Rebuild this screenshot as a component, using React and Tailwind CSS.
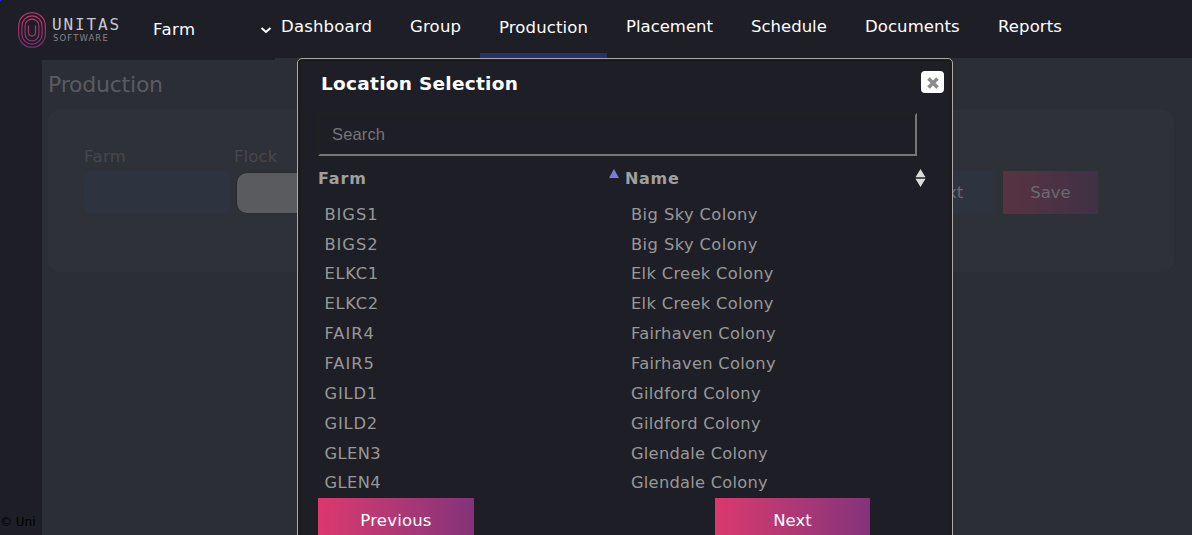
import React from "react";

const NAV = [
  { label: "Dashboard", box: "w-[129px] tracking-[0.17px]" },
  { label: "Group", box: "w-[89px] tracking-[0.2px]" },
  { label: "Production", box: "w-[127px] tracking-[0.12px]", active: true },
  { label: "Placement", box: "w-[125px]" },
  { label: "Schedule", box: "w-[114px]" },
  { label: "Documents", box: "w-[133px] tracking-[0.08px]" },
  { label: "Reports", box: "w-[103px] tracking-[0.1px]" },
];

const BIG = ["tracking-[0.95px]", "tracking-[0.42px]"];
const ELK = ["tracking-[0.7px]", "tracking-[0.33px]"];
const FAIR = ["tracking-[0.95px]", "tracking-[0.31px]"];
const GILD = ["tracking-[0.8px]", "tracking-[0.3px]"];
const GLEN = ["tracking-[0.4px]", "tracking-[0.24px]"];

const ROWS = [
  ["BIGS1", "Big Sky Colony", BIG],
  ["BIGS2", "Big Sky Colony", BIG],
  ["ELKC1", "Elk Creek Colony", ELK],
  ["ELKC2", "Elk Creek Colony", ELK],
  ["FAIR4", "Fairhaven Colony", FAIR],
  ["FAIR5", "Fairhaven Colony", FAIR],
  ["GILD1", "Gildford Colony", GILD],
  ["GILD2", "Gildford Colony", GILD],
  ["GLEN3", "Glendale Colony", GLEN],
  ["GLEN4", "Glendale Colony", GLEN],
];

function Logo() {
  return (
    <div className="flex w-[135px] shrink-0 pl-[18px] pt-3">
      <svg width="28" height="36" viewBox="0 0 28 36" fill="none" stroke="url(#logo)" strokeWidth="1.1">
        <defs>
          <linearGradient id="logo" x1="0" y1="0" x2="0" y2="36" gradientUnits="userSpaceOnUse">
            <stop offset="0" stopColor="#d0366a" />
            <stop offset="1" stopColor="#7d3075" />
          </linearGradient>
        </defs>
        <rect x="0.7" y="0.7" width="26.6" height="34.6" rx="13" />
        <rect x="3.9" y="3.900" width="20.2" height="28.200" rx="10" />
        <rect x="7.1" y="7.100" width="13.8" height="21.800" rx="6.9" />
        <path d="M10.500 13.500v6.500c0 2.500 1.200 4 3.500 4s3.500-1.500 3.500-4v-6.500" strokeWidth="1.300" />
      </svg>
      <div className="flex flex-col pl-[6px] pt-1 font-['DejaVu_Sans_Mono',monospace]">
        <span className="h-[17px] text-[16px] leading-[17px] tracking-[1.850px] text-[#c8c8cb]">UNITAS</span>
        <span className="h-[9px] pl-px pt-px font-['DejaVu_Sans',sans-serif] text-[8.500px] leading-[9px] tracking-[1.100px] text-[#85858a]">SOFTWARE</span>
      </div>
    </div>
  );
}

function Header() {
  return (
    <header className="relative z-10 flex h-[58px] bg-[#1e1e27] text-white">
      <div className="flex h-[60px] w-[275px] shrink-0 bg-[#1e1e27]">
        <Logo />
        <div className="flex grow items-center justify-between pl-[18px] pr-[3px]">
          <span className="pt-px text-[16.500px] tracking-[0.5px]">Farm</span>
          <svg width="12" height="8" viewBox="0 0 12 8" fill="none" stroke="#fff" strokeWidth="2">
            <path d="M1.500 2l4.500 4 4.500-4" />
          </svg>
        </div>
      </div>
      <nav className="-ml-[13px] flex h-[58px]">
        {NAV.map((n) => (
          <div
            key={n.label}
            className={
              n.active
                ? "flex h-[58px] border-b-[5px] border-[#27306c] pl-[19px] pt-4 " + n.box
                : "flex h-[58px] pl-[19px] pt-[15px] " + n.box
            }
          >
            <span className="text-[16.500px] leading-6">{n.label}</span>
          </div>
        ))}
      </nav>
    </header>
  );
}

function Page() {
  return (
    <div className="flex h-[477px]">
      <aside className="flex w-[42px] shrink-0 flex-col justify-end overflow-hidden bg-[#1e1e27] pb-[4px] text-[12px] leading-[17px] whitespace-nowrap text-black">
        © Uni
      </aside>
      <main className="grow bg-[#2c2e36] pl-[6px] pr-[18px] pt-[11px]">
        <h1 className="h-[41px] text-[22px] leading-[31px] tracking-[-0.220px] text-[#5a5b60]">Production</h1>
        <section className="flex h-[162px] justify-between rounded-xl bg-[#2f3139] pl-9 pr-[76px] pt-9 text-[16.500px]">
          <div className="flex gap-[3px]">
            <div className="w-[146px] leading-[22px] tracking-[0.400px] text-[#46474c]">
              Farm
              <div className="mt-[3px] h-[42px] rounded-md bg-[#2e343f]" />
            </div>
            <div className="w-[200px] pl-px leading-[22px] tracking-[0.100px] text-[#46474c]">
              Flock
              <div className="mt-[4px] ml-[2px] h-[42px] rounded-[11px] border border-[#28292e] bg-[#5a5b5f]" />
            </div>
          </div>
          <div className="flex gap-[10px] pt-[25px] text-[#6a696f]">
            <div className="flex h-[43px] w-[95px] items-center justify-center bg-[#2e3340] pt-px pr-[3px]">Next</div>
            <div className="flex h-[43px] w-[95px] items-center justify-center bg-linear-to-r from-[#583341] to-[#403145] pt-px">Save</div>
          </div>
        </section>
      </main>
    </div>
  );
}

function Dialog() {
  return (
    <div className="absolute left-[297px] top-[58px] z-20 flex h-[500px] w-[656px] flex-col rounded-t-[5px] border border-[#a9a9a9] bg-[#1e1e27] shadow-[inset_0_0_0_3px_#1c1c1d]">
      <div className="flex h-[54px] shrink-0 items-start justify-between pl-[23px] pr-2 pt-3">
        <h2 className="text-[18.500px] leading-[26px] font-bold tracking-[0.270px] text-white">Location Selection</h2>
        <button className="flex h-[22px] w-[23px] items-center justify-center rounded-[4px] bg-white pl-px pt-[2px]">
          <svg width="12" height="12" viewBox="0 0 12 12" stroke="#8b8b8b" strokeWidth="3.600">
            <path d="M1.500 1.500l9 9M10.500 1.500l-9 9" />
          </svg>
        </button>
      </div>
      <div className="ml-5 flex h-[43px] w-[599px] shrink-0 items-center border-2 border-t-[#20201f] border-l-[#20201f] border-r-[#767676] border-b-[#767676] pl-3 font-['Liberation_Sans',sans-serif] text-[16.500px] tracking-[0.150px] text-[#757575]">
        Search
      </div>
      <div className="flex h-[43px] shrink-0 pl-5 pt-[9px] text-[16px] leading-[27px] font-bold text-[#a0a09e]">
        <div className="flex w-[307px] justify-between pr-[6px]">
          <span className="tracking-[0.850px]">Farm</span>
          <svg className="mt-1" width="10" height="9" viewBox="0 0 10 9"><path d="M5 0l5 9H0z" fill="#7b7bdc" /></svg>
        </div>
        <div className="flex w-[301px] justify-between">
          <span className="tracking-[0.700px]">Name</span>
          <svg className="mt-[4px]" width="11" height="18" viewBox="0 0 11 18" fill="#dcdcdc"><path d="M5.500 0l5 8.300H.5zM5.500 18L.5 9.700h10z" /></svg>
        </div>
      </div>
      <div className="flex h-[299px] shrink-0 flex-col pl-[26.500px] pt-px text-[16.300px] text-[#989896]">
        {ROWS.map(([code, name, tracking]) => (
          <div key={code} className="flex h-[29.870px] shrink-0 items-center">
            <span className={"w-[306.500px] " + tracking[0]}>{code}</span>
            <span className={tracking[1]}>{name}</span>
          </div>
        ))}
      </div>
      <div className="flex gap-[241px] pl-5 text-[16.500px] text-white">
        <button className="h-[46px] w-[156px] bg-linear-to-r from-[#dc386d] to-[#84327a] pt-px tracking-[0.200px]">Previous</button>
        <button className="h-[46px] w-[155px] bg-linear-to-r from-[#dc386d] to-[#84327a] pt-px">Next</button>
      </div>
    </div>
  );
}

export default function App() {
  return (
    <div className="relative h-[535px] w-[1192px] overflow-hidden bg-[#2c2e36] font-['DejaVu_Sans',sans-serif]">
      <Header />
      <Page />
      <Dialog />
      <div className="absolute top-0 left-0 z-30 h-px w-px bg-[#2020ff]" />
    </div>
  );
}
